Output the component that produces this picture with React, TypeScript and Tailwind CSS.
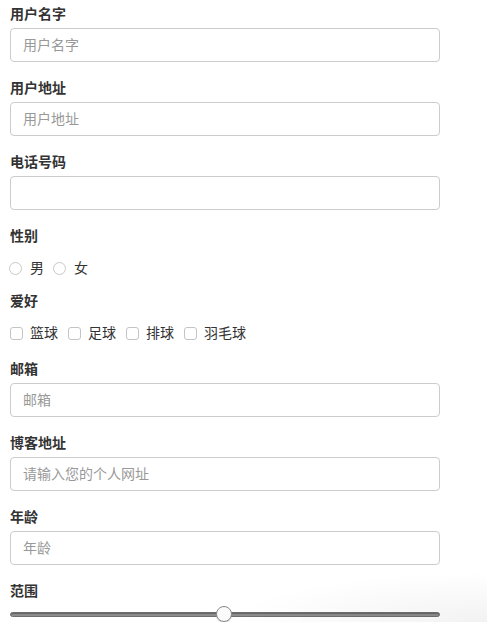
import React from "react";

const font = { fontFamily: '"Helvetica Neue", "Liberation Sans", "Noto Sans CJK SC", sans-serif' };

function Label({ children }: { children: React.ReactNode }) {
  return <div className="text-[14px] leading-[20px] font-bold text-[#333]">{children}</div>;
}

function TextField({ label, placeholder }: { label: string; placeholder?: string }) {
  return (
    <div className="mb-4">
      <Label>{label}</Label>
      <input
        className="mt-1 block w-full h-[34px] rounded-[4px] border border-[#cccccc] bg-white px-[12px] text-[14px] text-[#555] placeholder:text-[#999] outline-none"
        placeholder={placeholder}
        style={font}
      />
    </div>
  );
}

function Radio({ text }: { text: string }) {
  return (
    <label className="flex items-center mr-[9px]">
      <span className="inline-block w-[13px] h-[13px] rounded-full border border-[#c9c9c9] bg-white" />
      <span className="ml-[8px] text-[14px] text-[#333]">{text}</span>
    </label>
  );
}

function Check({ text }: { text: string }) {
  return (
    <label className="flex items-center mr-[10px]">
      <span className="inline-block w-[13px] h-[13px] rounded-[3px] border border-[#c4c4c4] bg-white" />
      <span className="ml-[7px] text-[14px] text-[#333]">{text}</span>
    </label>
  );
}

export default function App() {
  return (
    <div className="relative w-[487px] h-[622px] overflow-hidden bg-white" style={font}>
      <div className="w-[450px] px-[10px] pt-[4px]">
        <TextField label="用户名字" placeholder="用户名字" />
        <TextField label="用户地址" placeholder="用户地址" />
        <TextField label="电话号码" />
        <div className="mb-[13px]">
          <Label>性别</Label>
          <div className="mt-[12px] h-[20px] flex items-center -ml-[1px]">
            <Radio text="男" />
            <Radio text="女" />
          </div>
        </div>
        <div className="mb-4">
          <Label>爱好</Label>
          <div className="mt-[12px] h-[20px] flex items-center">
            <Check text="篮球" />
            <Check text="足球" />
            <Check text="排球" />
            <Check text="羽毛球" />
          </div>
        </div>
        <TextField label="邮箱" placeholder="邮箱" />
        <TextField label="博客地址" placeholder="请输入您的个人网址" />
        <TextField label="年龄" placeholder="年龄" />
        <div>
          <Label>范围</Label>
          <div className="relative mt-[5px] h-[16px] flex items-center">
            <div className="w-full h-[5px] rounded-full bg-[#8e8e8e] border border-[#6f6f6f] shadow-[inset_0_1px_1px_rgba(0,0,0,0.3)]" />
            <div className="absolute left-[206px] top-0 w-[16px] h-[16px] rounded-full bg-[#fafafa] border border-[#8a8a8a] shadow-[0_1px_1px_rgba(0,0,0,0.15)]" />
          </div>
        </div>
      </div>
      <div className="pointer-events-none absolute right-0 bottom-0 w-[260px] h-[50px] bg-[radial-gradient(ellipse_at_bottom_right,rgba(0,0,0,0.05),rgba(0,0,0,0)_70%)]" />
    </div>
  );
}
